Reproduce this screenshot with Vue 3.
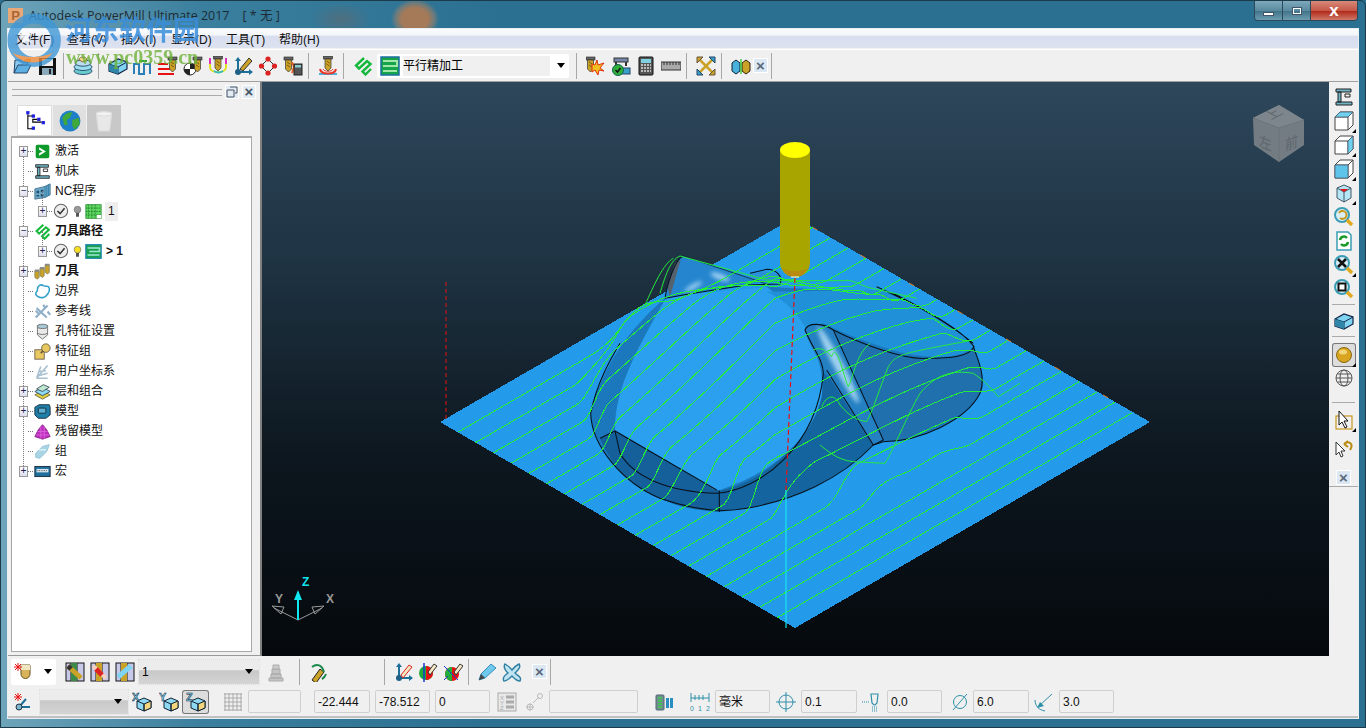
<script setup>
import { h } from 'vue'

// 小工具图标：刀头
const bit = (x, y, c = '#c9a227') =>
  `<rect x="${x}" y="${y}" width="9" height="3" fill="#666" stroke="#222" stroke-width=".6"/><path d="M${x + 1.5} ${y + 3}h6v9l-3 3-3-3z" fill="${c}" stroke="#333" stroke-width=".7"/><path d="M${x + 3} ${y + 5}l3 2M${x + 3} ${y + 8}l3 2" stroke="#7a5b10"/>`
const glass = inner =>
  `<circle cx="8" cy="8" r="7" fill="#d9eef5" stroke="#3a9db5" stroke-width="2"/>${inner}<path d="M13 13l5 5" stroke="#e0a91e" stroke-width="3.5"/>`
const face = (p, l) =>
  `<path d="M1 6l5-5h13v13l-5 5H1z" fill="#fff" stroke="#444"/><path d="M1 6h13v13M14 6l5-5" fill="none" stroke="#444"/><path d="${p}" fill="${l}" stroke="#456" stroke-width=".7"/>`
const axisBox = l =>
  `<path d="M5 9l7-3 7 3v7l-7 3-7-3z" fill="#8fd8f2" stroke="#123"/><path d="M12 12l7-3v7l-7 3z" fill="#f4d67c" stroke="#123"/><path d="M5 9l7 3v7" fill="none" stroke="#123"/><text x="0" y="9" font-family="Liberation Sans" font-weight="700" font-size="11" fill="#7fd4f2" stroke="#123" stroke-width=".5">${l}</text>`

const icons = {
  folder: '<path d="M1 17l1-13h6l2 2h5l-1 3" fill="#8bc8ee" stroke="#246"/><path d="M1 17l4-8h13l-4 8z" fill="#5eb0e4" stroke="#246"/><path d="M11 6c2-3 4-3 6-2l-1 3" fill="none" stroke="#e89a2a" stroke-width="2"/>',
  save: '<rect x="1" y="2" width="17" height="17" fill="#111"/><rect x="4" y="3" width="11" height="7" fill="#eee"/><rect x="4" y="12" width="11" height="7" fill="#8ab"/><rect x="11" y="13" width="2" height="5" fill="#222"/>',
  stock: '<ellipse cx="10" cy="15" rx="9" ry="3.5" fill="#6cc" stroke="#357"/><ellipse cx="10" cy="11" rx="9" ry="3.5" fill="#9de" stroke="#357"/><ellipse cx="10" cy="7" rx="8" ry="3.2" fill="#bde" stroke="#357"/><path d="M6 4c0-4 8-4 8 0l-4 2z" fill="#f4d98c" stroke="#864"/>',
  block: '<path d="M1 8l9-5 9 3v7l-9 5-9-3z" fill="#7fd4f2" stroke="#124" stroke-width="1.2"/><path d="M1 8l9 3 9-5M10 11v7" fill="none" stroke="#124"/><path d="M1 8v7l9 3v-7z" fill="#2f86a8"/>',
  pulse: '<path d="M1 18V8h5v10h5V8h6v10" fill="none" stroke="#2a7fb8" stroke-width="2"/><path d="M6 5h8" stroke="#3a3" stroke-width="2"/><path d="M6 5l3-2v4z" fill="#3a3"/>',
  redtool: '<path d="M0 8h10M0 13h16M0 18h16" stroke="#e81010" stroke-width="2"/>' + bit(10, 1),
  balltool: '<circle cx="7" cy="13" r="6" fill="#fff" stroke="#222"/><path d="M7 7a6 6 0 0 1 6 6H7zM7 13H1a6 6 0 0 0 6 6z" fill="#222"/>' + bit(10, 1),
  utool: '<path d="M2 2v9c0 7 16 7 16 0V2" fill="none" stroke="#e0e020" stroke-width="2"/><path d="M2 2v6M18 2v6" stroke="#e030c0" stroke-width="2"/><path d="M6 15c3 2 6 2 9 0" stroke="#30c0c0" stroke-width="2" fill="none"/>' + bit(5.5, 0),
  pencilaxis: '<path d="M5 3v13h13" fill="none" stroke="#1d6f9a" stroke-width="2"/><path d="M5 1l-3 4h6zM20 16l-4-3v6z" fill="#1d6f9a"/><circle cx="5" cy="16" r="3" fill="#1d5f85"/><path d="M7 13L16 2l3 3-9 10z" fill="#c9a227" stroke="#333"/>',
  diamonds: '<path d="M3 10l7-7 7 7-7 7z" fill="none" stroke="#333"/><circle cx="3.500" cy="10" r="2.600" fill="#d22"/><circle cx="10" cy="3" r="2.600" fill="#d22"/><circle cx="16.500" cy="10" r="2.600" fill="#d22"/><circle cx="10" cy="17" r="2.600" fill="#d22"/>',
  toolcalc: bit(1, 1) + '<path d="M9 6l2 5-2 6" stroke="#f06020" stroke-width="2" fill="none"/><rect x="11" y="8" width="8" height="11" fill="#555" stroke="#222"/><rect x="12" y="9" width="6" height="2.500" fill="#8cc"/>',
  cut: '<path d="M1 17c6 0 13 0 18 0v2H1z" fill="#4ab0dc"/><path d="M2 13c1 6 15 6 16 0" fill="none" stroke="#e83a2a" stroke-width="2"/><path d="M5 13c1 3 9 3 10 0" fill="none" stroke="#e83a2a"/>' + bit(5.500, 0),
  stripes: '<path d="M11 2L3 9.500 6 12.500 14 5 17.500 8 9.500 15.500 12.500 18.500 18 13" fill="none" stroke="#14b83a" stroke-width="2.400"/>',
  list: '<rect x="1" y="1" width="18" height="18" fill="#16a34a" stroke="#1e6fa0" stroke-width="1.500"/><path d="M3 5h14v5H3M3 15h14" fill="none" stroke="#9fe8a8" stroke-width="2"/>',
  explode: bit(0, 1) + '<path d="M6 8l3 1 2-5 1 5 6-2-4 5 4 3-5-1-1 5-3-5-3 2z" fill="#f0c020" stroke="#e03010"/>',
  check: '<rect x="3" y="2" width="14" height="4" fill="#78a" stroke="#333"/><path d="M5 6v4M15 6v4" stroke="#333" stroke-width="2"/><rect x="9" y="12" width="10" height="6" fill="#3aa0c8" stroke="#246"/><circle cx="7" cy="14" r="5.500" fill="#2fae3a" stroke="#165"/><path d="M4.500 14l2 2 3-4" stroke="#111" stroke-width="1.500" fill="none"/>',
  calc: '<rect x="3" y="1" width="14" height="18" rx="1" fill="#555" stroke="#111"/><rect x="5" y="3" width="10" height="4" fill="#7fd0e0"/><path d="M5 9h10M5 12h10M5 15h10" stroke="#bbb" stroke-width="2" stroke-dasharray="2 1"/>',
  ruler: '<rect x="0" y="6" width="20" height="8" fill="#aaa" stroke="#333"/><path d="M3 6v3M6 6v3M9 6v3M12 6v3M15 6v3M18 6v3" stroke="#333"/>',
  cross: '<path d="M3 3l14 14M17 3L3 17" stroke="#c9a227" stroke-width="2.500"/><path d="M1 1h6L1 7zM19 19h-6l6-6z" fill="#c9a227" stroke="#654"/><path d="M19 1h-6l6 6zM1 19h6l-6-6z" fill="#3aa0c8" stroke="#246"/>',
  cubes: '<path d="M1 7l4-3 4 3v8l-4 3-4-3z" fill="#4ab0dc" stroke="#123"/><path d="M11 7l4-3 4 3v8l-4 3-4-3z" fill="#c9a227" stroke="#321"/><path d="M10 3v15" stroke="#4c4" stroke-width="1.500"/>',
  machine: '<path d="M2 2h15v3H2zM4 5h3v10H4zM2 15h16v3H2z" fill="#6fb3c4" stroke="#222"/><path d="M11 7h5v3h-5z" fill="none" stroke="#222"/>',
  top: face('M1 6l5-5h13l-5 5z', '#6fd0f0'),
  side: face('M14 6l5-5v13l-5 5z', '#6fd0f0'),
  front: face('M1 6h13v13H1z', '#5ec4ea'),
  iso: '<path d="M3 5l7-3 7 3v10l-7 4-7-4z" fill="#b5e6f6" stroke="#456"/><path d="M3 5l7 4 7-4M10 9v10" fill="none" stroke="#456"/><path d="M6 6h8l-4 3z" fill="#e81010"/>',
  rotlens: glass('<path d="M5 6a4 4 0 1 1 1 5" fill="none" stroke="#c9961e" stroke-width="2"/>'),
  refresh: '<path d="M3 1h11l3 3v15H3z" fill="#fff" stroke="#3a9db5" stroke-width="1.500"/><path d="M6 9a4 4 0 0 1 7-2M14 11a4 4 0 0 1-7 2" fill="none" stroke="#1a9a2a" stroke-width="2.500"/>',
  fitlens: glass('<path d="M4 4l8 8M12 4l-8 8" stroke="#111" stroke-width="2.500"/>'),
  boxlens: glass('<rect x="4.500" y="4.500" width="7" height="7" fill="#fff" stroke="#111" stroke-width="2"/>'),
  ballshade: '<circle cx="10" cy="10" r="7.500" fill="#d9a520" stroke="#8a6a10"/><ellipse cx="9" cy="7" rx="4" ry="2.500" fill="#f2d77a"/>',
  wire: '<circle cx="10" cy="10" r="8" fill="none" stroke="#555"/><ellipse cx="10" cy="10" rx="4" ry="8" fill="none" stroke="#555"/><path d="M2 10h16M3.500 6h13M3.500 14h13" stroke="#555"/>',
  cursor: '<rect x="2" y="6" width="16" height="13" fill="none" stroke="#c9961e" stroke-width="1.200"/><path d="M5 1v14l3-3 3 6 2-1-3-6h4z" fill="#fff" stroke="#111"/>',
  undo: '<path d="M2 4v13l3-3 2 5 2-1-2-5h4z" fill="#fff" stroke="#333"/><path d="M10 6c5-4 10 0 6 6M10 6l4-3M10 6l4 3" fill="none" stroke="#b98a14" stroke-width="2"/>',
  magnet: '<path d="M7 3h9v9a4.500 4.500 0 0 1-9 0z" fill="#d7b45a" stroke="#6b5520"/><path d="M7 3h9v5H7z" fill="#efe6c0"/><path d="M1 2l6 6M7 2L1 8M4 1v8M0 5h8" stroke="#e81010"/>',
  bar1: '<rect x="1" y="1" width="18" height="18" fill="#c8c8e8" stroke="#111"/><path d="M6 1v18M12 1v18" stroke="#111"/><rect x="6" y="1" width="6" height="18" fill="#3a8a4a"/><path d="M3 4l13 12" stroke="#c9a227" stroke-width="5"/><path d="M3 4l3 3" stroke="#333" stroke-width="5"/>',
  bar2: '<rect x="1" y="1" width="18" height="18" fill="#c8c8e8" stroke="#111"/><path d="M6 1v18M12 1v18" stroke="#111"/><rect x="6" y="1" width="6" height="18" fill="#c9a227"/><path d="M3 4l13 12" stroke="#f4d0c0" stroke-width="4"/><path d="M6 7l6 6" stroke="#d22" stroke-width="5"/>',
  bar3: '<rect x="1" y="1" width="18" height="18" fill="#c8c8e8" stroke="#111"/><path d="M6 1v18M12 1v18" stroke="#111"/><rect x="6" y="1" width="6" height="18" fill="#c9a227"/><path d="M3 15L16 4" stroke="#7fd4f2" stroke-width="5"/>',
  graystack: '<path d="M3 16h14v3H3zM5 12h10v4H5zM6 7h8v5H6z" fill="#c4c4c4" stroke="#aaa"/><path d="M7 3h6v4H7z" fill="#ccc" stroke="#aaa"/>',
  toolrot: '<path d="M4 18L12 7l4 3-8 11z" fill="#c9a227" stroke="#222"/><path d="M4 5c5-4 10-2 12 5M14 17c2-1 3-2 4-5" fill="none" stroke="#1a8a4a" stroke-width="2"/>',
  axpen: '<path d="M6 3v13h13" fill="none" stroke="#1d6f9a" stroke-width="2"/><path d="M6 1l-3 4h6zM20 16l-4-3v6zM6 16l-5 3" fill="#1d6f9a"/><circle cx="6" cy="16" r="3" fill="#1d5f85"/><path d="M8 13L16 3l3 2-9 11z" fill="#f4e6c0" stroke="#d22"/>',
  halfblue: '<circle cx="8" cy="11" r="7" fill="#1fae3a"/><path d="M8 4a7 7 0 0 1 0 14z" fill="#e81010"/><path d="M6 1v19" stroke="#1838d0" stroke-width="1.500"/><path d="M10 10l6-8 3 2-7 9z" fill="#f4e6c0" stroke="#333"/>',
  halfgreen: '<circle cx="9" cy="12" r="7" fill="#e81010"/><path d="M9 5a7 7 0 0 0 0 14z" fill="#1fae3a"/><path d="M1 4l14 14M1 18L5 14" stroke="#1838d0"/><path d="M11 10l6-8 3 2-7 9z" fill="#f4e6c0" stroke="#333"/>',
  bluepen: '<path d="M2 18l2-6L14 2l5 4L8 16z" fill="#6fc8ee" stroke="#3a8fb8"/><path d="M2 18l2-6 4 4z" fill="#444"/>',
  xtool: '<path d="M3 2c5 3 7 6 7 6s3-4 7-6c2 3 0 5-4 9 3 3 7 4 5 8-4 0-6-3-8-5-3 3-5 5-8 5-2-3 1-6 4-8C3 8 1 5 3 2z" fill="#bfe4f2" stroke="#2f7f9f" stroke-width="1.400"/>',
  csys: '<path d="M5 15L12 7M5 15h11" stroke="#1d6f9a" stroke-width="2"/><circle cx="5" cy="15" r="3" fill="#7fb5cc" stroke="#234"/><path d="M1 2l6 6M7 2L1 8M4 1v8M0 5h8" stroke="#e81010"/>',
  boxX: axisBox('X'), boxY: axisBox('Y'), boxZ: axisBox('Z'),
  grid: '<path d="M1 2h18M1 6h18M1 10h18M1 14h18M1 18h18M2 1v18M6 1v18M10 1v18M14 1v18M18 1v18" stroke="#aaa"/>',
  xyzlist: '<rect x="1" y="1" width="18" height="18" fill="#e8e8e8" stroke="#aaa"/><path d="M9 5h8M9 10h8M9 15h8" stroke="#aaa" stroke-width="3"/><text x="3" y="8" font-size="6" fill="#aaa" font-family="Liberation Sans">X</text><text x="3" y="13" font-size="6" fill="#aaa" font-family="Liberation Sans">Y</text><text x="3" y="18" font-size="6" fill="#aaa" font-family="Liberation Sans">Z</text>',
  graycs: '<circle cx="6" cy="15" r="3" fill="none" stroke="#bbb"/><path d="M2 15h8M6 11v8M9 11l6-6" stroke="#bbb"/><circle cx="16" cy="4" r="2.500" fill="none" stroke="#bbb"/>',
  cans: '<rect x="2" y="3" width="8" height="15" rx="1" fill="#6f8f8f" stroke="#567"/><path d="M4 6h4M4 9h4M4 12h4M4 15h4" stroke="#3ad04a" stroke-width="1.500"/><rect x="12" y="6" width="3" height="10" fill="#2a8fc0"/><rect x="16" y="6" width="3" height="10" fill="#2a8fc0"/>',
  scale: '<path d="M1 1v9M19 1v9M1 6h18M5 3v5M9 3v5M13 3v5" stroke="#2f8fa8" fill="none"/><text x="0" y="19" font-size="7" fill="#2f8fa8" font-family="Liberation Sans" textLength="20">0 1 2</text>',
  crosshair: '<circle cx="10" cy="10" r="7" fill="none" stroke="#2f8fa8"/><path d="M10 0v20M0 10h20" stroke="#2f8fa8"/>',
  tolerance: '<path d="M9 2h7l-1 9-2 2h-1l-2-2z" fill="none" stroke="#2f8fa8" stroke-width="1.200"/><path d="M0 10h7M10 15h5M10 17h5M10 19h5" stroke="#2f8fa8" stroke-dasharray="1 1"/>',
  dia: '<circle cx="10" cy="10" r="6.500" fill="none" stroke="#2f8fa8"/><path d="M3 18L17 2" stroke="#2f8fa8"/>',
  rad: '<path d="M18 2L5 14" stroke="#2f8fa8"/><path d="M3 16l7-2-4-4z" fill="#2f8fa8"/><path d="M1 8c0 6 4 10 10 11" stroke="#2f8fa8" fill="none"/>',
  active: '<rect x="2" y="2" width="16" height="16" rx="2" fill="#0e9a2a"/><path d="M6 5l8 5-8 5v-3l4-2-4-2z" fill="#fff"/>',
  nc: '<path d="M1 7l12-3 6-3v13l-6 3-12 2z" fill="#6fa9c8" stroke="#3a6a88"/><path d="M3 9h3v3H3zM8 8h3v3H8zM3 14h3v2H3zM8 13h3v3H8z" fill="#1d4f6f"/><path d="M13 4v13M15 3v13M17 2v13" stroke="#2f7fa8"/>',
  ncprog: '<rect x="1" y="2" width="18" height="16" fill="#5fd85f" stroke="#2f8f3f"/><path d="M4 2v16M8 2v16M12 2v16M1 6h18M1 10h18M1 14h18" stroke="#1f7f2f" stroke-dasharray="2 1"/><path d="M14 14h5v4h-5z" fill="#fff"/>',
  lined: '<rect x="1" y="2" width="18" height="16" fill="#18a04a" stroke="#1e88b0" stroke-width="1.500"/><path d="M3 6h14v4H5M3 14h14" fill="none" stroke="#9fe8d8" stroke-width="1.800"/>',
  tools: '<path d="M1 9h5v8l-2 2-3-2zM7 6h5v9l-2 2-3-2zM13 2h5v9l-2 2-3-2z" fill="#c9a227" stroke="#886"/><path d="M1 9h5M7 6h5M13 2h5" stroke="#888" stroke-width="2.500"/>',
  boundary: '<path d="M4 8c0-5 4-7 7-5s6-1 7 3-3 10-7 11-9-2-9-4 2-3 2-5z" fill="#fff" stroke="#2f9fc8" stroke-width="1.800"/>',
  refline: '<path d="M2 17L16 3M3 6l12 11M5 12l-3-3M16 10l3 4M11 2l2 4" stroke="#8fb0c8" stroke-width="2.500" fill="none"/>',
  hole: '<path d="M4 3v11l6 5 6-5V3z" fill="#e8e8e8" stroke="#666"/><ellipse cx="10" cy="4" rx="6" ry="2.500" fill="#a8c8d8" stroke="#666"/><path d="M4 12c3 2 9 2 12 0" fill="none" stroke="#666"/>',
  feature: '<rect x="1" y="8" width="11" height="11" fill="#e8c860" stroke="#654"/><path d="M8 12L14 6" stroke="#654" stroke-width="2"/><circle cx="14" cy="6" r="5" fill="#e8c860" stroke="#654"/>',
  ucs: '<path d="M3 18L16 3M3 18h13M3 18L8 4M6 10l8-1M5 15l11-3" stroke="#a8c0d0" stroke-width="1.800" fill="none"/>',
  layers: '<path d="M1 14l9-5 9 5-9 5z" fill="#e0d040" stroke="#664"/><path d="M1 10l9-5 9 5-9 5z" fill="#8fd8f2" stroke="#345"/><path d="M3 7l8-5 7 3-8 5z" fill="#bfe8d0" stroke="#345"/>',
  model: '<path d="M1 5l5-3h12l1 3v9l-5 4H5l-4-4z" fill="#1f7fa8" stroke="#123"/><rect x="5" y="6" width="9" height="6" rx="1" fill="#5fb0d0" stroke="#123"/>',
  rest: '<path d="M10 2l5 6 4 8-9 3-9-3 4-8z" fill="#c030c0" stroke="#802080"/><path d="M4 10h12M2 14h16M8 3v16M12 3v16" stroke="#e070e0" stroke-width=".8"/>',
  group: '<path d="M2 12l8-8 8-2-3 8-8 8-5-1z" fill="#a8d4e4" stroke="#8fc0d4"/><path d="M6 8l8 0" stroke="#d8f0f8" stroke-width="2"/>',
  macro: '<rect x="1" y="4" width="18" height="12" fill="#1f6f9a" stroke="#123"/><rect x="3" y="7" width="14" height="4" fill="#d8e8f0"/><path d="M4 9h12" stroke="#333" stroke-dasharray="1 1"/>',
  treeIcon: '<rect x="2" y="1" width="3" height="3" fill="#2222e0"/><rect x="7" y="4" width="3" height="3" fill="#2222e0"/><rect x="12" y="7" width="3" height="3" fill="#2222e0"/><rect x="16" y="10" width="3" height="3" fill="#2222e0"/><rect x="7" y="15" width="3" height="3" fill="#2222e0"/><path d="M3.500 4v13h4M3.500 5.500h4M8 8v3h8M8 8.500h4" fill="none" stroke="#000"/>',
  globe: '<circle cx="10" cy="10" r="9.500" fill="#1f7fc8"/><path d="M3 7c3-4 6-5 9-5l-2 5-3 2 1 4-3 1zM12 9l6-2 1 6-5 5-2-4z" fill="#3fa83a"/>',
  bin: '<path d="M3 3h14l-2 16H5z" fill="#e8e8e8" stroke="#ddd"/><ellipse cx="10" cy="3.500" rx="7" ry="2" fill="#f2f2f2" stroke="#ddd"/>',
}

const Ic = props => h('svg', { class: 'ic', viewBox: '0 0 20 20', innerHTML: icons[props.n] })
Ic.props = ['n']

const topA = ['folder', 'save', '|', 'stock', '|', 'block', 'pulse', 'redtool', 'balltool', 'utool', 'pencilaxis', 'diamonds', 'toolcalc', '|', 'cut', '|', 'stripes']
const topB = ['explode', 'check', 'calc', 'ruler', '|', 'cross', '|', 'cubes']
const rightA = ['machine', 'top', 'side', 'front', 'iso', 'rotlens', 'refresh', 'fitlens', 'boxlens', '|', 'block', '|']
const flyout = new Set(['top', 'side', 'front', 'iso', 'fitlens'])

const tree = [
  { t: '激活', i: 'active', e: '+' },
  { t: '机床', i: 'machine' },
  { t: 'NC程序', i: 'nc', e: '-' },
  { t: '1', i: 'ncprog', sub: true, off: true, sel: true },
  { t: '刀具路径', i: 'stripes', e: '-', b: true },
  { t: '> 1', i: 'lined', sub: true, b: true },
  { t: '刀具', i: 'tools', e: '+', b: true },
  { t: '边界', i: 'boundary' },
  { t: '参考线', i: 'refline' },
  { t: '孔特征设置', i: 'hole' },
  { t: '特征组', i: 'feature' },
  { t: '用户坐标系', i: 'ucs' },
  { t: '层和组合', i: 'layers', e: '+' },
  { t: '模型', i: 'model', e: '+' },
  { t: '残留模型', i: 'rest' },
  { t: '组', i: 'group' },
  { t: '宏', i: 'macro', e: '+' },
]

const menus = ['文件(F)', '查看(V)', '插入(I)', '显示(D)', '工具(T)', '帮助(H)']

// 刀具路径：沿平面方向的平行线，经过凸台时抬高
const L = [440, 422], T = [795, 217], B = [795, 628]
const smooth = (a, b, x) => {
  const k = Math.min(1, Math.max(0, (x - a) / (b - a)))
  return k * k * (3 - 2 * k)
}
const lift = (x, y) => {
  const d = Math.hypot((x - 785) / 205, (y - 395) / 118)
  const rim = 1 - smooth(0.86, 1.02, d + 0.04 * Math.sin(x / 17) * Math.cos(y / 23))
  const tent = x < 775 ? 1 - (775 - x) / 290 : Math.max(0.25, 1 - (x - 775) / 250)
  const back = smooth(275, 360, y) * (1 - 0.5 * smooth(360, 500, y))
  return rim * 75 * tent * back
}
const paths = []
for (let i = 1; i < 20; i++) {
  const v = i / 20
  let d = ''
  for (let s = 0; s <= 90; s++) {
    const u = s / 90
    const x = L[0] + u * (T[0] - L[0]) + v * (B[0] - L[0])
    const y = L[1] + u * (T[1] - L[1]) + v * (B[1] - L[1])
    d += `${s ? 'L' : 'M'}${x.toFixed(1)} ${(y - lift(x, y)).toFixed(1)}`
  }
  paths.push(d)
}
</script>

<template>
  <div class="window">
    <header class="titlebar">
      <span class="appicon">P</span>
      <span class="title">Autodesk PowerMill Ultimate 2017&nbsp;&nbsp;&nbsp;&nbsp;[ * 无 ]</span>
      <div class="winbtns">
        <i class="wb"><b class="min"></b></i>
        <i class="wb"><b class="max"></b></i>
        <i class="wb close">x</i>
      </div>
    </header>

    <div class="client">
      <nav class="menubar">
        <span v-for="m in menus" :key="m" class="menu">{{ m }}</span>
      </nav>

      <div class="toolbar top">
        <template v-for="(n, k) in topA" :key="k">
          <i v-if="n === '|'" class="sep"></i>
          <span v-else class="btn"><Ic :n="n" /></span>
        </template>
        <div class="strategy">
          <Ic n="list" />
          <span class="strategy-text">平行精加工</span>
          <i class="caret"></i>
        </div>
        <i class="sep far"></i>
        <template v-for="(n, k) in topB" :key="k">
          <i v-if="n === '|'" class="sep"></i>
          <span v-else class="btn"><Ic :n="n" /></span>
        </template>
        <i class="xclose">×</i>
        <i class="sep"></i>
      </div>

      <div class="main">
        <aside class="side">
          <div class="side-head">
            <span class="grip"></span>
            <i class="mini"><svg viewBox="0 0 12 12"><path d="M4 1h7v6H9M1 4h7v7H1z" fill="none" stroke="#456"/></svg></i>
            <i class="mini x">×</i>
          </div>
          <div class="tabs">
            <span class="tab on"><Ic n="treeIcon" /></span>
            <span class="tab"><Ic n="globe" /></span>
            <span class="tab off"><Ic n="bin" /></span>
          </div>
          <div class="tree">
            <i class="trunk"></i>
            <div v-for="r in tree" :key="r.t" class="row" :class="{ sub: r.sub, bold: r.b }">
              <span class="exp" :class="{ none: !r.e && !r.sub }">{{ r.sub ? '+' : r.e === '-' ? '−' : r.e }}</span>
              <i class="dots"></i>
              <template v-if="r.sub">
                <svg class="tick" viewBox="0 0 18 18"><circle cx="9" cy="9" r="7.500" fill="#eee" stroke="#666" stroke-width="1.200"/><path d="M5 9l3 3 5-6" fill="none" stroke="#333" stroke-width="1.800"/></svg>
                <svg class="bulb" viewBox="0 0 12 18"><circle cx="6" cy="6.500" r="4.500" :fill="r.off ? '#999' : '#f8e020'" stroke="#777"/><rect x="4" y="11" width="4" height="5" fill="#555"/></svg>
              </template>
              <Ic :n="r.i" />
              <span class="label" :class="{ sel: r.sel }">{{ r.t }}</span>
            </div>
          </div>
        </aside>

        <section class="viewport">
          <svg class="scene" viewBox="262 82 1067 574">
            <path class="jag" d="M440 422L795 217 1150 422 795 628z" fill="#239aea" />
            <path d="M812 227L1150 422" stroke="#e8781e" stroke-dasharray="6 50" fill="none" />

            <!-- 凸台，坐标按局部放大图取值 -->
            <g transform="translate(560 130) scale(.33333)">
              <path d="M315 505C250 560 130 680 92 850 95 950 190 1060 300 1105 400 1140 480 1150 560 1135 700 1110 840 1050 940 945L970 935C1080 935 1220 870 1260 790 1280 740 1250 680 1240 650L1000 490 620 470z" fill="#1c78bd" />
              <path d="M120 925L165 903 478 1082V1146C400 1140 350 1130 300 1105 210 1070 150 1000 120 925z" fill="#155f9a" />
              <path d="M478 1082C600 1060 760 950 790 730L830 760 940 945C840 1050 700 1110 560 1135L478 1146z" fill="#14659f" />
              <path d="M165 900C165 790 210 690 320 500L620 470C700 530 740 560 740 600 770 680 795 720 785 800 760 910 660 1020 480 1080H465z" fill="#2ba0ef" />
              <path d="M620 485L960 480C1060 520 1200 590 1240 650 1200 690 1090 690 980 655 900 630 830 600 790 580L740 600C720 560 680 510 620 485z" fill="#2090d8" />
              <path d="M820 600C900 640 1030 690 1100 685 1170 685 1230 680 1242 650 1255 690 1275 740 1268 770 1250 830 1170 890 1000 935L970 930 880 720z" fill="#1f70ad" />
              <path d="M735 600C745 575 790 580 820 600L970 930 940 945C880 860 810 740 790 715 770 680 740 630 735 600z" fill="#2480c2" />
              <path d="M315 505C320 470 345 385 370 378L610 455 540 468 400 490z" fill="#2586cf" />
              <path d="M560 440C590 420 650 420 665 445 668 458 650 462 620 462z" fill="#2a90d8" />
              <path d="M330 500L362 390 345 400 322 470z" fill="#55626e" />
              <ellipse class="glow" cx="835" cy="705" rx="14" ry="130" transform="rotate(-28 835 705)" />
              <ellipse class="glow" cx="480" cy="440" rx="30" ry="9" transform="rotate(20 480 440)" />
              <ellipse class="glow" cx="400" cy="470" rx="30" ry="7" transform="rotate(-30 400 470)" />

              <g class="edges">
                <path d="M92 850C95 950 190 1060 300 1105 400 1140 480 1150 560 1135 700 1110 840 1050 940 945L970 935C1080 935 1220 870 1260 790 1280 740 1250 680 1240 650" />
                <path d="M92 850C110 760 150 690 180 640" />
                <path d="M165 903L470 1080M120 925L165 903 180 970C220 1040 320 1085 470 1090 600 1080 770 950 790 730 790 690 760 660 735 600 745 575 790 580 820 600L970 930 940 945 800 720" />
                <path d="M478 1082V1146" />
                <path d="M820 600C900 640 1030 690 1100 685 1170 685 1230 680 1242 650 1200 590 1060 520 950 470M1000 490C1080 530 1180 590 1240 640" />
                <path d="M315 505L400 490 560 465 660 462C670 440 650 418 620 418L570 430M315 505C320 470 345 385 370 378" />
                <path d="M370 378L620 462" stroke-width="2" />
              </g>

              <g class="hand">
                <path d="M300 490C315 440 330 390 360 378L620 450 660 452H850C880 445 900 470 950 478L1070 505" />
                <path d="M255 525C280 470 310 400 340 385" />
                <path d="M780 945C800 960 830 990 880 995L975 1000C1000 960 1040 860 1080 790 1130 730 1180 720 1240 730 1270 750 1290 770 1315 800L1380 760" />
                <path d="M785 830C800 795 825 790 840 825 870 860 890 870 920 875 940 840 960 770 985 710 1010 670 1030 670 1240 630" />
                <path d="M760 660C780 650 800 660 815 680 830 630 850 740 865 770 880 740 890 670 930 640" />
              </g>
            </g>

            <g class="jag" fill="none" stroke="#24ea3c" stroke-width="1">
              <path v-for="(d, k) in paths" :key="k" :d="d" />
            </g>

            <path d="M446 282V420" stroke="#e81010" stroke-dasharray="4 3" />
            <path d="M795 278L786 490" stroke="#e81010" stroke-width="1.200" stroke-dasharray="5 3" />
            <path d="M786 490V628" stroke="#18e6ee" stroke-width="1.200" />

            <!-- 刀具 -->
            <path d="M780 150H810V262C810 271 803 277 795 277 787 277 780 271 780 262z" fill="#a9a500" />
            <path d="M782 268C786 275 790 277 795 277 800 277 804 275 808 268 803 272 787 272 782 268z" fill="#b88a10" />
            <ellipse cx="795" cy="150" rx="15" ry="8" fill="#ffff00" />
            <path d="M791 277h8" stroke="#fff" />

            <!-- 视角方块 -->
            <g>
              <path d="M1279 105L1304 120V145L1279 162 1254 145 1253 118z" fill="#737c83" />
              <path d="M1253 118L1279 128 1304 120 1279 105z" fill="#7d868c" />
              <path d="M1279 128V162M1253 118L1279 128 1304 120" stroke="#6c7479" fill="none" />
              <text class="cube" transform="matrix(.85 -.45 .85 .45 1271 120)">上</text>
              <text class="cube" transform="matrix(.85 .33 0 1 1259 146)">左</text>
              <text class="cube" transform="matrix(.85 -.33 0 1 1285 151)">前</text>
            </g>

            <!-- 坐标轴 -->
            <path d="M298 620L274 608M298 620L322 608" stroke="#999" />
            <path d="M272 606l12 1-3 7zM324 606l-12 1 3 7z" fill="none" stroke="#999" />
            <path d="M298 620V592" stroke="#10e6f0" stroke-width="2" />
            <path d="M298 590l-4 10h8z" fill="#10e6f0" />
            <text class="ax z" x="302" y="586">Z</text>
            <text class="ax" x="275" y="603">Y</text>
            <text class="ax" x="326" y="603">X</text>
          </svg>
        </section>

        <aside class="rtool">
          <template v-for="(n, k) in rightA" :key="k">
            <i v-if="n === '|'" class="hsep"></i>
            <span v-else class="rbtn" :class="{ fly: flyout.has(n) }"><Ic :n="n" /></span>
          </template>
          <span class="rbtn fly pressed"><Ic n="ballshade" /></span>
          <span class="rbtn short"><Ic n="wire" /></span>
          <i class="hsep wide-gap"></i>
          <span class="rbtn fly"><Ic n="cursor" /></span>
          <span class="rbtn tall"><Ic n="undo" /></span>
          <i class="xclose">×</i>
          <i class="hsep end"></i>
        </aside>
      </div>

      <div class="toolbar low">
        <span class="magnet"><Ic n="magnet" /><i class="caret"></i></span>
        <span class="btn"><Ic n="bar1" /></span>
        <span class="btn"><Ic n="bar2" /></span>
        <span class="btn"><Ic n="bar3" /></span>
        <div class="combo wide"><span>1</span><i class="caret"></i></div>
        <span class="btn stack"><Ic n="graystack" /></span>
        <i class="sep far"></i>
        <span class="btn"><Ic n="toolrot" /></span>
        <i class="gap"></i>
        <i class="sep"></i>
        <span class="btn"><Ic n="axpen" /></span>
        <span class="btn"><Ic n="halfblue" /></span>
        <span class="btn"><Ic n="halfgreen" /></span>
        <i class="sep"></i>
        <span class="btn"><Ic n="bluepen" /></span>
        <span class="btn"><Ic n="xtool" /></span>
        <i class="xclose">×</i>
        <i class="sep"></i>
      </div>

      <div class="toolbar status">
        <span class="btn s"><Ic n="csys" /></span>
        <div class="combo narrow"><i class="caret"></i></div>
        <span class="btn s"><Ic n="boxX" /></span>
        <span class="btn s"><Ic n="boxY" /></span>
        <span class="btn s pressed"><Ic n="boxZ" /></span>
        <span class="btn s ml10"><Ic n="grid" /></span>
        <span class="field f53"></span>
        <span class="field f56 m13">-22.444</span>
        <span class="field f55">-78.512</span>
        <span class="field f55">0</span>
        <span class="btn s ml3"><Ic n="xyzlist" /></span>
        <span class="btn s"><Ic n="graycs" /></span>
        <span class="field f89"></span>
        <span class="btn s ml12"><Ic n="cans" /></span>
        <span class="btn s ml9"><Ic n="scale" /></span>
        <span class="field f55">毫米</span>
        <span class="btn s ml2"><Ic n="crosshair" /></span>
        <span class="field f56">0.1</span>
        <span class="btn s ml1"><Ic n="tolerance" /></span>
        <span class="field f55">0.0</span>
        <span class="btn s dia"><Ic n="dia" /></span>
        <span class="field f56">6.0</span>
        <span class="btn s ml1"><Ic n="rad" /></span>
        <span class="field f55">3.0</span>
      </div>
    </div>

    <!-- 水印叠加在窗口左上 -->
    <div class="wm">
      <svg class="wm-logo" viewBox="0 0 64 64"><circle cx="30" cy="30" r="24" fill="none" stroke="#3f97d6" stroke-width="11" /><path d="M6 44c12 14 34 14 44 0-12 6-30 6-44 0z" fill="#ee8a3a" /><path d="M18 18l4 6 6-2-4 5 3 6-6-3-5 4 1-7-5-4 7-1z" fill="#fff" /></svg>
      <span class="wm-cn">河东软件园</span>
      <span class="wm-url">www.pc0359.cn</span>
    </div>
  </div>
</template>

<style scoped>
.window {
  position: relative;
  width: 1366px;
  height: 728px;
  box-sizing: border-box;
  display: flex;
  flex-direction: column;
  overflow: hidden;
  padding: 0 7px 9px 7px;
  border: 1px solid #1d3a48;
  border-radius: 6px 6px 0 0;
  background:
    radial-gradient(ellipse 24px 20px at 414px 18px, #a57a58 0 55%, rgba(170, 130, 100, .5) 80%, transparent 100%),
    radial-gradient(ellipse 30px 16px at 340px 18px, #4f6f7f 0, transparent 100%),
    radial-gradient(ellipse 50px 16px at 110px 20px, #5c93aa 0, transparent 100%),
    linear-gradient(90deg, #6ea4ba 0, #3b7f9e 200px, #2b7091 500px, #2b7091 100%);
  font-family: "Liberation Sans", "Noto Sans CJK SC", sans-serif;
}
.titlebar { height: 28px; display: flex; align-items: center; flex-shrink: 0; color: #1c2c36; }
.appicon {
  width: 15px; height: 15px; margin: 0 6px 0 0;
  background: #e8a878; color: #a63; font: 700 13px/15px "Liberation Sans", sans-serif; text-align: center;
}
.title { font: 12.5px "Open Sans", "Noto Sans CJK SC", sans-serif; white-space: nowrap; margin-top: -2px; }
.winbtns { margin: -8px 0 0 auto; display: flex; height: 19px; border: 1px solid #2a4a5a; border-top: 0; border-radius: 0 0 4px 4px; overflow: hidden; }
.wb { width: 27px; height: 19px; display: flex; align-items: center; justify-content: center; background: linear-gradient(#7fa9bd, #5a8a9f 50%, #3f7288 52%, #6d9cb0); border-right: 1px solid #2a4a5a; }
.wb b { display: block; background: #fff; border: 1px solid #456; }
.wb .min { width: 9px; height: 2px; margin-top: 6px; }
.wb .max { width: 8px; height: 6px; background: transparent; box-shadow: inset 0 0 0 1px #fff; }
.wb.close { width: 46px; border: 0; color: #fff; font: 700 17px/17px "Liberation Sans", sans-serif; background: linear-gradient(#d88a78, #c4584a 50%, #b22c1c 55%, #d07868); }

.client { flex: 1; min-height: 0; display: flex; flex-direction: column; background: #f0f0f0; outline: 1px solid #e8eef2; }
.menubar {
  height: 19px; flex-shrink: 0; display: flex; align-items: center; padding-left: 7px;
  background: linear-gradient(#fafbfd 0, #f4f6fa 30%, #d8deef 40%, #dde2f0 100%);
  font-size: 12px; color: #111;
}
.menu { white-space: nowrap; width: 53px; flex-shrink: 0; }
.menu:nth-child(1) { width: 52px; }
.menu:nth-child(2) { width: 54px; }
.menu:nth-child(3) { width: 50px; }
.menu:nth-child(4) { width: 55px; }
.toolbar { display: flex; align-items: center; flex-shrink: 0; background: #f0f0f0; }
.toolbar.top { height: 33px; margin-top: 1px; padding-left: 2px; border-top: 1px solid #fff; border-bottom: 1px solid #a0a0a0; box-sizing: border-box; }
.toolbar.low { height: 31px; padding-left: 3px; }
.toolbar.status { height: 31px; padding-left: 2px; border-bottom: 2px solid #c0c0c0; box-sizing: border-box; }
.btn { width: 25px; height: 24px; display: flex; align-items: center; justify-content: center; flex-shrink: 0; }
.btn.s { width: 27px; }
.btn.pressed, .rbtn.pressed { background: #ddd; box-shadow: inset 0 0 0 1px #777; border-radius: 3px; }
.btn.stack { margin-left: 4px; }
.btn.dia { width: 23px; margin-left: 6px; }
.ml1 { margin-left: 1px; }
.ml2 { margin-left: 2px; }
.ml3 { margin-left: 3px; }
.ml9 { margin-left: 9px; }
.ml10 { margin-left: 10px; }
.ml12 { margin-left: 12px; }
.sep { width: 1px; height: 26px; margin: 0 6px 0 3px; background: #a8a8a8; flex-shrink: 0; }
.sep.far { margin-left: 7px; }
.low .sep { margin-right: 5px; }
.low .sep.far { margin-left: 11px; }
.gap { width: 51px; flex-shrink: 0; }
.caret { width: 0; height: 0; border: 4px solid transparent; border-top: 5px solid #000; border-bottom: 0; flex-shrink: 0; }
.xclose {
  width: 15px; height: 15px; box-sizing: border-box; flex-shrink: 0; background: #dbe8f4; color: #5a6a78; border: 1px solid #fff;
  font: 700 15px/13px "Liberation Sans", sans-serif; text-align: center;
}
.low .xclose { margin-left: 8px; }

.strategy { width: 192px; height: 24px; margin-left: 2px; display: flex; align-items: center; background: #fff; padding-left: 3px; box-sizing: border-box; flex-shrink: 0; border-radius: 2px; }
.strategy-text { flex: 1; margin-left: 3px; height: 20px; margin-right: 7px; line-height: 20px; background: #f0f0f0; font-size: 12px; }
.strategy .caret { margin-right: 4px; }

.main { flex: 1; min-height: 0; display: flex; }
.side { width: 254px; flex-shrink: 0; box-sizing: border-box; display: flex; flex-direction: column; padding: 2px 0 3px 3px; border-right: 2px solid #808080; border-bottom: 1px solid #999; }
.side-head { height: 16px; display: flex; align-items: center; padding-left: 1px; flex-shrink: 0; }
.grip { width: 210px; height: 5px; border-top: 1px solid #aaa; border-bottom: 1px solid #aaa; }
.mini { width: 12px; height: 12px; margin-left: 3px; display: block; color: #456; background: #e2eaf2; font: 700 15px/12px "Liberation Sans", sans-serif; text-align: center; border: 1px solid #fff; }
.mini svg { display: block; }
.tabs { margin: 5px 0 0 6px; height: 31px; display: flex; gap: 1px; flex-shrink: 0; }
.tab { width: 33px; display: flex; align-items: center; justify-content: center; background: #e0e0e0; }
.tab.on { width: 35px; background: #fff; box-shadow: inset 0 0 0 1px #ddd; }
.tab.off { width: 34px; background: #c8c8c8; }
.tab .ic { width: 22px; height: 22px; }
.tree { position: relative; flex: 1; width: 241px; box-sizing: border-box; background: #fff; border: 1px solid #a8a8a8; border-width: 2px 1px 1px 1px; padding-top: 3px; font-size: 12px; color: #111; }
.trunk { position: absolute; left: 11px; top: 10px; height: 320px; border-left: 1px dotted #777; }
.row { position: relative; height: 20px; display: flex; align-items: center; padding-left: 7px; }
.row.sub { padding-left: 26px; }
.row.sub::before { content: ""; position: absolute; left: 30px; top: -10px; height: 16px; border-left: 1px dotted #777; }
.row.bold .label { font-weight: 700; }
.exp { position: relative; width: 7px; height: 9px; border: 1px solid #999; background: linear-gradient(#fff, #dde); color: #225; font: 10px/9px "Liberation Mono", monospace; text-align: center; flex-shrink: 0; overflow: hidden; }
.exp.none { visibility: hidden; }
.dots { width: 5px; border-top: 1px dotted #777; flex-shrink: 0; }
.tree .ic { width: 17px; height: 17px; margin-left: 1px; }
.tick { width: 16px; height: 16px; flex-shrink: 0; margin-left: 1px; }
.bulb { width: 9px; height: 15px; margin: 0 2px 0 4px; flex-shrink: 0; }
.label { margin-left: 3px; white-space: nowrap; padding: 0 1px; line-height: 19px; }
.label.sel { background: #eee; padding: 0 3px; }

.viewport { flex: 1; min-width: 0; background: linear-gradient(#2e475b 0, #1f3444 30%, #0d171f 65%, #05090d 100%); }
.scene { display: block; width: 100%; height: 100%; }
.jag { shape-rendering: crispEdges; }
.edges { fill: none; stroke: #07121c; stroke-width: 3.2; }
.hand { fill: none; stroke: #24ea3c; stroke-width: 3; }
.glow { fill: #c8ecff; opacity: .75; filter: blur(6px); }
.cube { font: 15px "Noto Sans CJK SC", sans-serif; fill: #5d666c; }
.ax { font: 700 12px "Liberation Sans", sans-serif; fill: #999; }
.ax.z { fill: #10e6f0; }

.rtool { width: 29px; flex-shrink: 0; display: flex; flex-direction: column; align-items: center; padding-top: 3px; box-sizing: border-box; background: #f0f0f0; }
.rbtn { position: relative; width: 24px; height: 24px; display: flex; align-items: center; justify-content: center; flex-shrink: 0; }
.rbtn.tall { margin-top: 4px; }
.rbtn.short { height: 22px; }
.rbtn.pressed { margin-top: 2px; }
.rbtn.fly::after { content: ""; position: absolute; right: 0; bottom: 0; border: 2px solid transparent; border-right-color: #000; border-bottom-color: #000; }
.hsep { width: 23px; height: 1px; margin: 3px 0 4px; background: #aaa; flex-shrink: 0; }
.hsep.wide-gap { margin: 13px 0 5px; }
.hsep.end { margin: 1px 0 0; width: 29px; }
.rtool .xclose { margin-top: 10px; }

.magnet { width: 45px; height: 26px; margin-right: 6px; background: #fff; display: flex; align-items: center; justify-content: space-between; padding: 0 4px 0 3px; box-sizing: border-box; flex-shrink: 0; border-radius: 2px; }
.combo { height: 24px; display: flex; align-items: center; justify-content: space-between; box-sizing: border-box; padding: 0 6px 0 3px; background: linear-gradient(#ececec 0, #ececec 40%, #c8c8c8 45%, #d4d4d4 100%); outline: 1px dotted #ddd; font-size: 12px; flex-shrink: 0; }
.combo.wide { width: 120px; margin-left: 2px; }
.combo.narrow { width: 88px; margin-left: 3px; justify-content: flex-end; }
.field { height: 23px; box-sizing: border-box; border: 1px solid #cfcfcf; border-radius: 2px; background: #f0f0f0; padding-left: 3px; font-size: 12px; line-height: 22px; flex-shrink: 0; margin-left: 5px; color: #111; }
.btn.s + .field { margin-left: 2px; }
.f53 { width: 53px; }
.f55 { width: 55px; }
.f56 { width: 56px; }
.f89 { width: 89px; }
.field.m13 { margin-left: 13px; }

.wm { position: absolute; left: 0; top: 0; width: 210px; height: 70px; pointer-events: none; }
.wm-logo { position: absolute; left: 6px; top: 12px; width: 58px; height: 58px; opacity: .8; }
.wm-cn { position: absolute; left: 64px; top: 14px; font: 700 27px/28px "Noto Sans CJK SC", sans-serif; color: #3a8edc; opacity: .85; white-space: nowrap; }
.wm-url { position: absolute; left: 65px; top: 47px; font: 700 20px/18px "Liberation Serif", serif; color: #6fb23a; opacity: .8; white-space: nowrap; }
</style>

<style>
html, body { margin: 0; background: #2b7091; overflow: hidden; }
.ic { display: block; width: 20px; height: 20px; flex-shrink: 0; }
</style>
